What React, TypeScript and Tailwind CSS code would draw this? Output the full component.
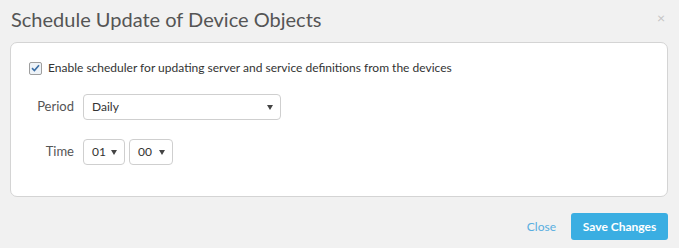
import React from "react";

const Caret = () => (
  <svg width="6" height="5" viewBox="0 0 6 5" className="shrink-0">
    <path d="M0 0H6L3 5Z" fill="#444" />
  </svg>
);

const Select = ({ value, className }: { value: string; className: string }) => (
  <div
    className={`flex items-center justify-between h-[26px] border border-[#cfcfcf] rounded-[4px] bg-white pl-[8px] pr-[7px] text-[12px] text-[#333] ${className}`}
  >
    <span>{value}</span>
    <Caret />
  </div>
);

export default function App() {
  return (
    <div
      className="w-[679px] h-[248px] bg-[#f1f1f1] text-[#444] overflow-hidden"
      style={{ fontFamily: "Lato, 'Open Sans', sans-serif" }}
    >
      {/* Header */}
      <div className="flex items-start justify-between pl-[11px] pr-[14px] pt-[5px] h-[42px]">
        <h2 className="text-[20px] leading-[28px] text-[#555]">
          Schedule Update of Device Objects
        </h2>
        <span className="text-[14px] leading-[18px] text-[#c4c4c4] mt-[4px]">×</span>
      </div>

      {/* Body */}
      <div className="mx-[10px] w-[658px] h-[155px] bg-white border border-[#d4d4d4] rounded-[7px] pl-[18px] pt-[17px]">
        <label className="flex items-center gap-[6px] h-[16px]">
          <span className="flex items-center justify-center w-[13px] h-[13px] border border-[#9e9e9e] rounded-[2px] bg-[#eef3f8]">
            <svg width="9" height="8" viewBox="0 0 9 8">
              <path d="M1 4.2L3.4 6.5L8 1.2" stroke="#3b6ea5" strokeWidth="1.6" fill="none" />
            </svg>
          </span>
          <span className="text-[12px] text-[#333]">
            Enable scheduler for updating server and service definitions from the devices
          </span>
        </label>

        <div className="flex items-center mt-[18px]">
          <span className="w-[54px] text-right pr-[9px] text-[13px] text-[#555]">Period</span>
          <Select value="Daily" className="w-[198px]" />
        </div>

        <div className="flex items-center mt-[19px]">
          <span className="w-[54px] text-right pr-[9px] text-[13px] text-[#555]">Time</span>
          <div className="flex gap-[4px]">
            <Select value="01" className="w-[42px]" />
            <Select value="00" className="w-[44px]" />
          </div>
        </div>
      </div>

      {/* Footer */}
      <div className="flex items-center justify-end gap-[15px] pr-[11px] mt-[16px]">
        <span className="text-[12px] text-[#58aee0]">Close</span>
        <button className="h-[27px] w-[97px] bg-[#3aaee2] rounded-[3px] text-white text-[12px] font-bold">
          Save Changes
        </button>
      </div>
    </div>
  );
}
